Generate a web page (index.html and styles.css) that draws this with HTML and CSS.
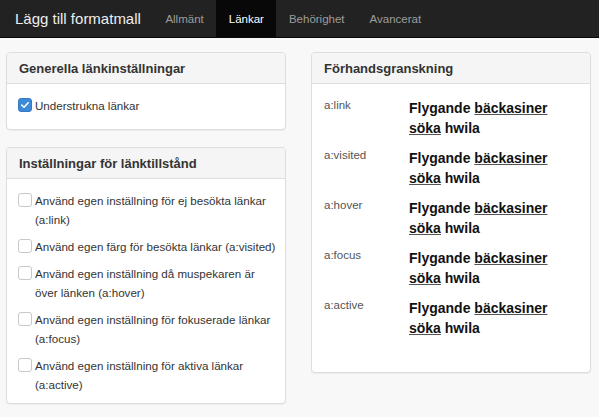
FILE: index.html
```html
<!DOCTYPE html>
<html lang="sv">
<head>
<meta charset="utf-8">
<title>Lägg till formatmall</title>
<link rel="stylesheet" href="styles.css">
</head>
<body>
<nav class="navbar">
  <span class="brand">Lägg till formatmall</span>
  <ul class="nav">
    <li><a>Allmänt</a></li>
    <li class="active"><a>Länkar</a></li>
    <li><a>Behörighet</a></li>
    <li><a>Avancerat</a></li>
  </ul>
</nav>
<main class="main">
  <div class="col">
    <section class="panel">
      <h3 class="panel-heading">Generella länkinställningar</h3>
      <div class="panel-body body-short">
        <label class="check"><span class="box checked"><svg viewBox="0 0 14 14" width="10" height="10"><path d="M2.5 7.2 L5.6 10.2 L11.5 3.8" fill="none" stroke="#fff" stroke-width="2.2" stroke-linecap="round" stroke-linejoin="round"/></svg></span><span class="text">Understrukna länkar</span></label>
      </div>
    </section>
    <section class="panel">
      <h3 class="panel-heading">Inställningar för länktillstånd</h3>
      <div class="panel-body body-list">
        <label class="check"><span class="box"></span><span class="text">Använd egen inställning för ej besökta länkar (a:link)</span></label>
        <label class="check"><span class="box"></span><span class="text">Använd egen färg för besökta länkar (a:visited)</span></label>
        <label class="check"><span class="box"></span><span class="text">Använd egen inställning då muspekaren är över länken (a:hover)</span></label>
        <label class="check"><span class="box"></span><span class="text">Använd egen inställning för fokuserade länkar (a:focus)</span></label>
        <label class="check"><span class="box"></span><span class="text">Använd egen inställning för aktiva länkar (a:active)</span></label>
      </div>
    </section>
  </div>
  <div class="col">
    <section class="panel">
      <h3 class="panel-heading">Förhandsgranskning</h3>
      <div class="panel-body body-preview">
        <div class="prow"><span class="plabel">a:link</span><span class="ptext"><span>Flygande</span> <span class="ul">bäckasiner</span> <span class="ul">söka</span> <span>hwila</span></span></div>
        <div class="prow"><span class="plabel">a:visited</span><span class="ptext"><span>Flygande</span> <span class="ul">bäckasiner</span> <span class="ul">söka</span> <span>hwila</span></span></div>
        <div class="prow"><span class="plabel">a:hover</span><span class="ptext"><span>Flygande</span> <span class="ul">bäckasiner</span> <span class="ul">söka</span> <span>hwila</span></span></div>
        <div class="prow"><span class="plabel">a:focus</span><span class="ptext"><span>Flygande</span> <span class="ul">bäckasiner</span> <span class="ul">söka</span> <span>hwila</span></span></div>
        <div class="prow"><span class="plabel">a:active</span><span class="ptext"><span>Flygande</span> <span class="ul">bäckasiner</span> <span class="ul">söka</span> <span>hwila</span></span></div>
      </div>
    </section>
  </div>
</main>
</body>
</html>
```
FILE: styles.css
```css
* { box-sizing: border-box; }
html, body { margin: 0; padding: 0; }
body {
  background: #f8f8f8;
  font-family: "Liberation Sans", Arial, sans-serif;
  color: #333;
  width: 599px;
  height: 417px;
  overflow: hidden;
}
.navbar {
  display: flex;
  align-items: stretch;
  height: 38px;
  background: #222;
  border-bottom: 1px solid #080808;
}
.brand {
  display: flex;
  align-items: center;
  padding: 0 12px 0 15px;
  font-size: 15px;
  color: #eee;
}
.nav {
  display: flex;
  list-style: none;
  margin: 0;
  padding: 0;
}
.nav li {
  display: flex;
}
.nav a {
  display: flex;
  align-items: center;
  padding: 0 12.5px;
  font-size: 11.5px;
  color: #9d9d9d;
}
.nav .active a {
  background: #080808;
  color: #fff;
}
.main {
  display: grid;
  grid-template-columns: 280px 280px;
  column-gap: 25px;
  padding: 14px 0 0 6px;
  align-items: start;
}
.col {
  display: flex;
  flex-direction: column;
  gap: 17px;
}
.panel {
  background: #fff;
  border: 1px solid #ddd;
  border-radius: 4px;
  box-shadow: 0 1px 1px rgba(0,0,0,.05);
}
.panel-heading {
  margin: 0;
  height: 31px;
  display: flex;
  align-items: center;
  padding: 0 12px;
  background: #f5f5f5;
  border-bottom: 1px solid #ddd;
  border-radius: 3px 3px 0 0;
  font-size: 13px;
  font-weight: bold;
  color: #333;
}
.panel-body {
  padding: 12px 4px 1px 11px;
}
.body-short { padding-bottom: 6px; }
.check {
  display: flex;
  align-items: flex-start;
  font-size: 11.6px;
  line-height: 19px;
  margin-bottom: 8px;
  color: #333;
}
.text {
  max-width: 244.7px;
}
.box {
  flex: none;
  width: 14px;
  height: 14px;
  margin-top: 2px;
  margin-right: 3px;
  border: 1px solid #c8c8c8;
  border-radius: 3px;
  background: #fff;
  display: flex;
  align-items: center;
  justify-content: center;
}
.box.checked {
  background: #3d8ad8;
  border-color: #3579c0;
}
.body-preview {
  padding: 14px 12px 24px;
}
.prow {
  display: flex;
  align-items: flex-start;
  margin-bottom: 10px;
}
.plabel {
  flex: none;
  width: 85px;
  font-size: 11.5px;
  line-height: 14px;
  color: #555;
}
.ptext {
  font-size: 14px;
  font-weight: bold;
  line-height: 20px;
  color: #111;
}
.ul {
  text-decoration: underline;
  text-decoration-color: #555;
}
```
